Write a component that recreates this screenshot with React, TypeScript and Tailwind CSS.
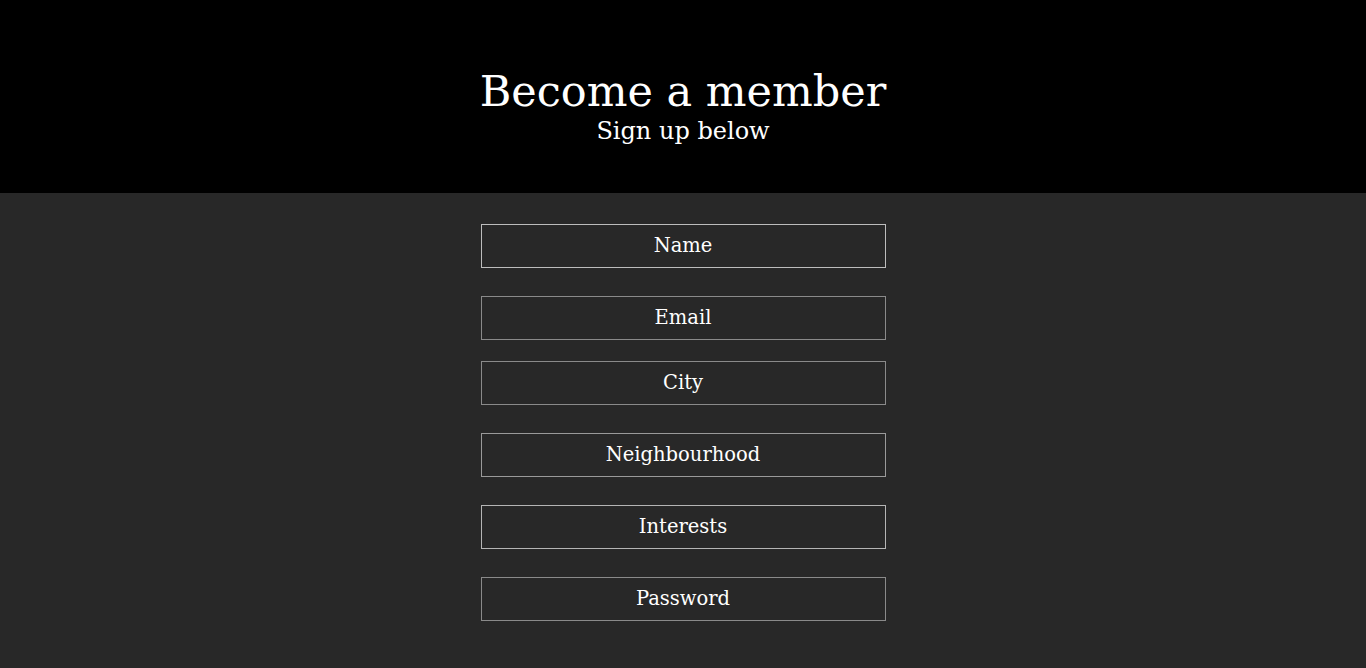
const fields = [
  { label: "Name", border: "border-[#bdbdbd]", mt: "mt-0" },
  { label: "Email", border: "border-[#8a8a8a]", mt: "mt-[28px]" },
  { label: "City", border: "border-[#8a8a8a]", mt: "mt-[21px]" },
  { label: "Neighbourhood", border: "border-[#9a9a9a]", mt: "mt-[28px]" },
  { label: "Interests", border: "border-[#b5b5b5]", mt: "mt-[28px]" },
  { label: "Password", border: "border-[#8a8a8a]", mt: "mt-[28px]" },
];

export default function App() {
  return (
    <div className="min-h-[668px] bg-[#282828] font-['DejaVu_Serif',serif] text-white">
      {/* Kopfbereich */}
      <header className="flex h-[193px] flex-col items-center bg-black pt-[65px]">
        <h1 className="text-[43px] leading-[52px]">Become a member</h1>
        <p className="text-[24px] leading-[28px]">Sign up below</p>
      </header>

      {/* Formular */}
      <form className="mx-auto flex w-[405px] flex-col pt-[31px]">
        {fields.map((f) => (
          <input
            key={f.label}
            type={f.label === "Password" ? "password" : "text"}
            placeholder={f.label}
            className={`${f.mt} h-[44px] w-full border bg-transparent pb-[2px] text-center text-[19.5px] text-white outline-none placeholder:text-white ${f.border}`}
          />
        ))}
      </form>
    </div>
  );
}
